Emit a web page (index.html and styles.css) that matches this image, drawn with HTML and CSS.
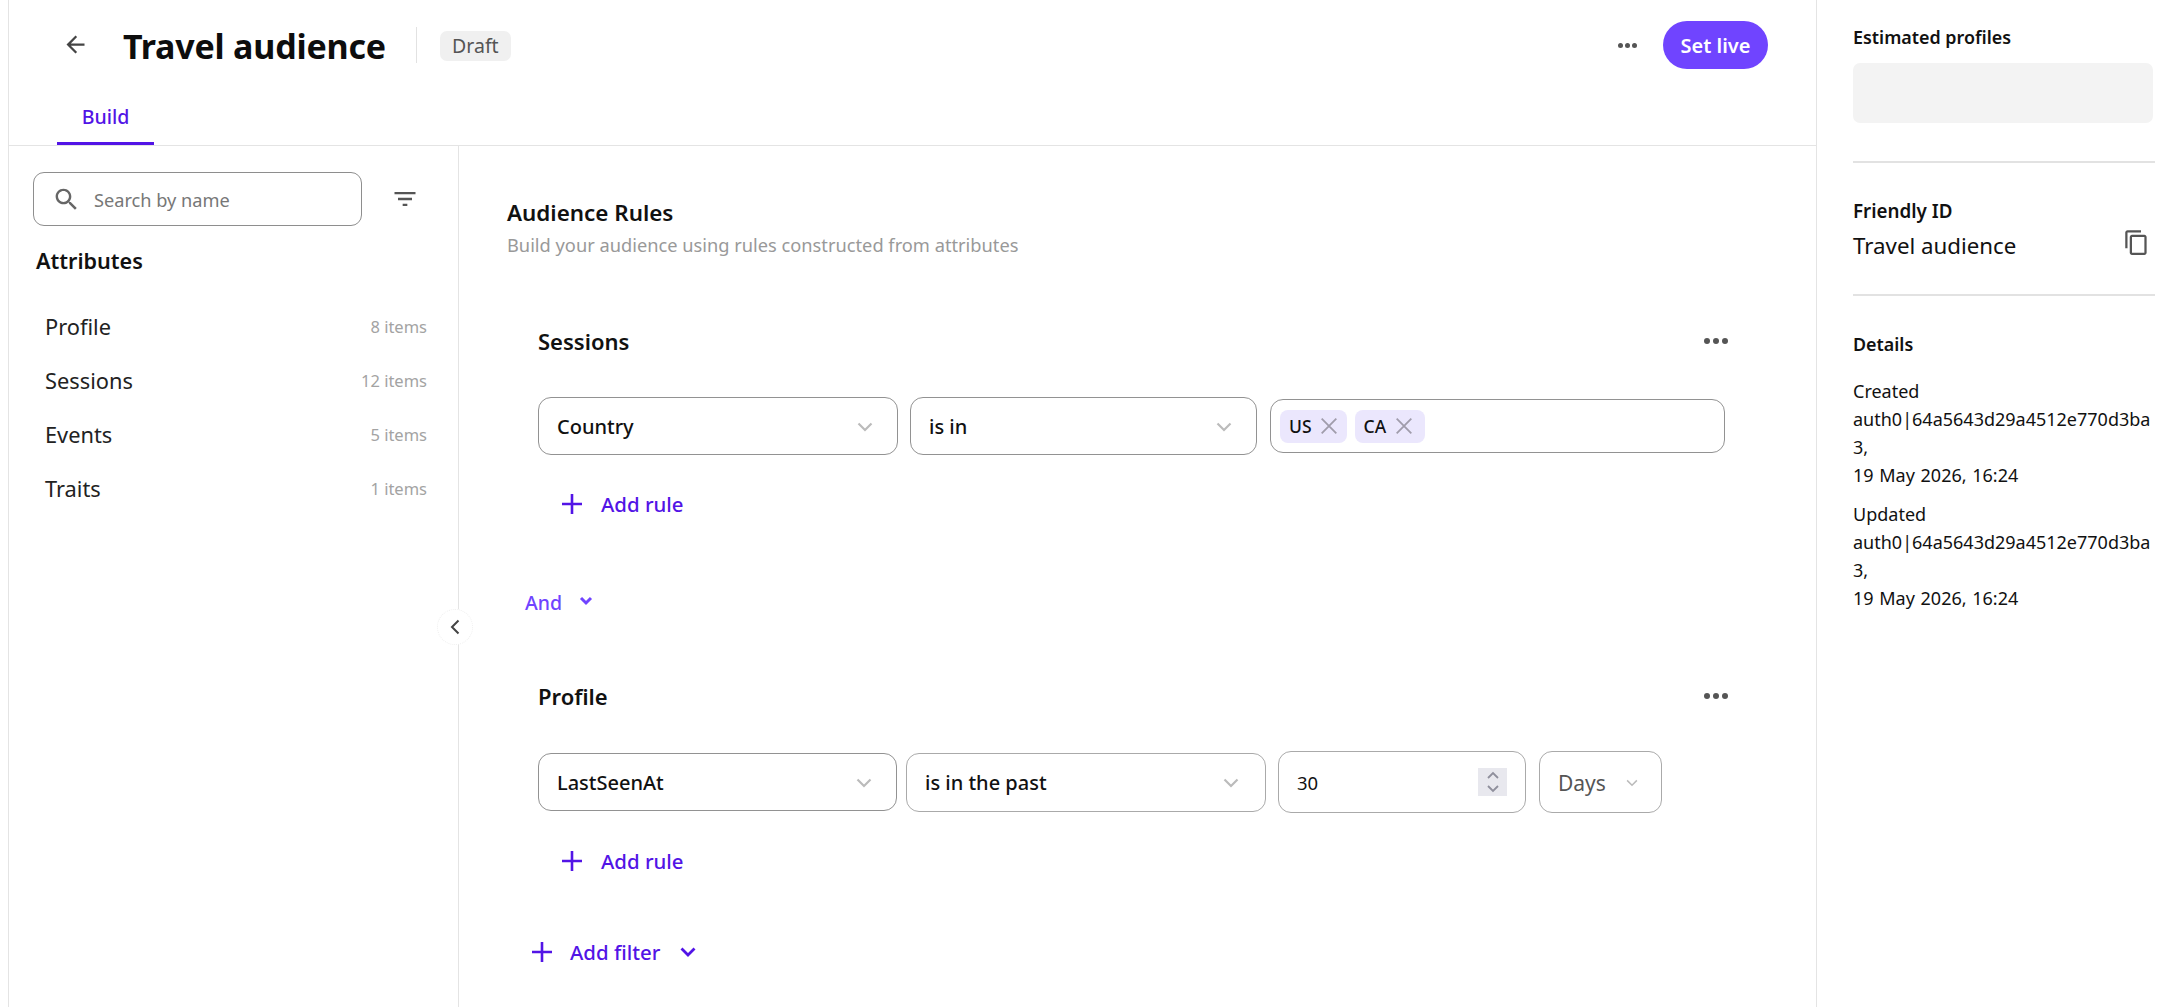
FILE: index.html
```html
<!DOCTYPE html>
<html lang="en">
<head>
<meta charset="utf-8">
<title>Travel audience</title>
<link rel="stylesheet" href="styles.css">
</head>
<body>
<div class="app">
  <main class="main">
    <header class="header">
      <div class="topbar">
        <button class="icon-btn back" aria-label="Back">
          <svg class="ic-back" viewBox="0 0 24 24"><path d="M20 11H7.83l5.59-5.59L12 4l-8 8 8 8 1.41-1.41L7.83 13H20v-2z"/></svg>
        </button>
        <h1 class="title">Travel audience</h1>
        <span class="title-sep"></span>
        <span class="status">Draft</span>
        <div class="top-actions">
          <span class="dots"><i></i><i></i><i></i></span>
          <button class="primary">Set live</button>
        </div>
      </div>
      <nav class="tabs"><a class="tab">Build</a></nav>
    </header>
    <div class="workspace">
      <aside class="sidebar">
        <div class="search-row">
          <label class="search">
            <svg class="ic-search" viewBox="0 0 24 24"><path d="M15.5 14h-.79l-.28-.27C15.41 12.59 16 11.11 16 9.5 16 5.91 13.09 3 9.5 3S3 5.91 3 9.5 5.91 16 9.5 16c1.61 0 3.09-.59 4.23-1.57l.27.28v.79l5 4.99L20.49 19l-4.99-5zm-6 0C7.01 14 5 11.99 5 9.5S7.01 5 9.5 5 14 7.01 14 9.5 11.99 14 9.5 14z"/></svg>
            <span class="placeholder">Search by name</span>
          </label>
          <svg class="ic-filter" viewBox="0 0 24 24"><path d="M10 18h4v-2h-4v2zM3 6v2h18V6H3zm3 7h12v-2H6v2z"/></svg>
        </div>
        <h2 class="attr-title">Attributes</h2>
        <ul class="attr-list">
          <li><span>Profile</span><small>8 items</small></li>
          <li><span>Sessions</span><small>12 items</small></li>
          <li><span>Events</span><small>5 items</small></li>
          <li><span>Traits</span><small>1 items</small></li>
        </ul>
        <button class="collapse" aria-label="Collapse">
          <svg viewBox="0 0 12 16"><path d="M9.5 1.5 3 8l6.5 6.5"/></svg>
        </button>
      </aside>
      <section class="content">
        <h2 class="rules-title">Audience Rules</h2>
        <p class="rules-sub">Build your audience using rules constructed from attributes</p>

        <div class="card card-first">
          <div class="card-head"><h3>Sessions</h3><span class="dots dots-lg"><i></i><i></i><i></i></span></div>
          <div class="row row-one">
            <div class="select w-country"><span>Country</span><svg class="chev" viewBox="0 0 16 10"><path d="M1.5 1.5 8 8l6.5-6.5"/></svg></div>
            <div class="select w-isin"><span>is in</span><svg class="chev" viewBox="0 0 16 10"><path d="M1.5 1.5 8 8l6.5-6.5"/></svg></div>
            <div class="multi">
              <span class="chip">US<svg viewBox="0 0 16 16"><path d="M1.5 1.5l13 13M14.5 1.5l-13 13"/></svg></span>
              <span class="chip">CA<svg viewBox="0 0 16 16"><path d="M1.5 1.5l13 13M14.5 1.5l-13 13"/></svg></span>
            </div>
          </div>
          <button class="link add-rule"><svg class="plus" viewBox="0 0 20 20"><path d="M10 0v20M0 10h20"/></svg>Add rule</button>
        </div>

        <button class="and">And<svg viewBox="0 0 14 10"><path d="M2 2l5 5 5-5"/></svg></button>

        <div class="card card-second">
          <div class="card-head"><h3>Profile</h3><span class="dots dots-lg"><i></i><i></i><i></i></span></div>
          <div class="row row-two">
            <div class="select w-last"><span>LastSeenAt</span><svg class="chev" viewBox="0 0 16 10"><path d="M1.5 1.5 8 8l6.5-6.5"/></svg></div>
            <div class="select w-past"><span>is in the past</span><svg class="chev" viewBox="0 0 16 10"><path d="M1.5 1.5 8 8l6.5-6.5"/></svg></div>
            <div class="number"><span>30</span>
              <span class="spin"><svg viewBox="0 0 14 22"><path d="M2 7l5-5 5 5M2 15l5 5 5-5"/></svg></span>
            </div>
            <div class="select w-days"><span>Days</span><svg class="chev chev-sm" viewBox="0 0 16 10"><path d="M1.5 1.5 8 8l6.5-6.5"/></svg></div>
          </div>
          <button class="link add-rule add-rule-two"><svg class="plus" viewBox="0 0 20 20"><path d="M10 0v20M0 10h20"/></svg>Add rule</button>
        </div>

        <button class="link add-filter"><svg class="plus" viewBox="0 0 20 20"><path d="M10 0v20M0 10h20"/></svg>Add filter<svg class="chev-filter" viewBox="0 0 16 10"><path d="M1.5 1.5 8 8l6.5-6.5"/></svg></button>
      </section>
    </div>
  </main>
  <aside class="details">
    <h4 class="d-head d-est">Estimated profiles</h4>
    <div class="skeleton"></div>
    <hr class="d-rule d-rule-one">
    <h4 class="d-head d-friendly">Friendly ID</h4>
    <div class="friendly"><span>Travel audience</span>
      <svg class="ic-copy" viewBox="0 0 24 24"><path d="M16 1H4c-1.1 0-2 .9-2 2v14h2V3h12V1zm3 4H8c-1.1 0-2 .9-2 2v14c0 1.1.9 2 2 2h11c1.1 0 2-.9 2-2V7c0-1.1-.9-2-2-2zm0 16H8V7h11v14z"/></svg>
    </div>
    <hr class="d-rule d-rule-two">
    <h4 class="d-head d-details">Details</h4>
    <p class="meta">Created<br>auth0|64a5643d29a4512e770d3ba<br>3,<br>19 May 2026, 16:24</p>
    <p class="meta">Updated<br>auth0|64a5643d29a4512e770d3ba<br>3,<br>19 May 2026, 16:24</p>
  </aside>
</div>
</body>
</html>
```
FILE: styles.css
```css
* { box-sizing: border-box; }
html, body { margin: 0; height: 100%; background: #fff; }
body { font-family: "Noto Sans", "Open Sans", sans-serif; color: #111; overflow: hidden; }
button { font: inherit; background: none; border: 0; padding: 0; cursor: pointer; }
h1, h2, h3, h4, p, ul { margin: 0; padding: 0; }

.app { display: flex; height: 1007px; padding-left: 8px; }
.main { width: 1809px; flex: none; display: flex; flex-direction: column; border-left: 1px solid #e4e4e4; border-right: 1px solid #e4e4e4; }

/* header */
.header { height: 146px; flex: none; border-bottom: 1px solid #e4e4e4; display: flex; flex-direction: column; }
.topbar { height: 90px; display: flex; align-items: center; padding-left: 53px; padding-right: 48px; }
.back { display: flex; width: 61px; }
.ic-back { width: 27px; height: 27px; fill: #444; margin-top: -2px; }
.title { font-size: 34px; font-weight: 700; line-height: 44px; letter-spacing: -.2px; color: #0d0d0d; margin-top: 2px; }
.title-sep { width: 1px; height: 36px; background: #e2e2e2; margin: 0 23px 0 30px; }
.status { width: 71px; height: 30px; border-radius: 7px; background: #f0f0f0; color: #555; font-size: 19.5px; line-height: 30px; text-align: center; margin-top: 2px; }
.top-actions { margin-left: auto; display: flex; align-items: center; gap: 26px; }
.dots { display: flex; gap: 2px; }
.dots i { width: 5px; height: 5px; border-radius: 50%; background: #555; }
.dots-lg { gap: 3px; }
.dots-lg i { width: 6px; height: 6px; }
.primary { width: 105px; height: 48px; border-radius: 24px; background: #7044ff; color: #fff; font-size: 20px; font-weight: 600; }
.tabs { flex: 1; padding-left: 48px; display: flex; }
.tab { width: 97px; height: 54px; border-bottom: 3px solid #5214e6; color: #5214e6; font-size: 19.5px; font-weight: 500; text-align: center; line-height: 52px; margin-top: 1px; }

/* layout */
.workspace { flex: 1; display: flex; min-height: 0; }
.sidebar { width: 450px; flex: none; border-right: 1px solid #e4e4e4; padding: 26px 31px 0 24px; position: relative; }

/* sidebar */
.search-row { display: flex; align-items: center; gap: 29px; }
.search { width: 329px; height: 54px; flex: none; border: 1.5px solid #8e8e8e; border-radius: 11px; display: flex; align-items: center; padding-left: 18px; }
.ic-search { width: 29px; height: 29px; fill: #666; flex: none; margin-right: 13px; }
.placeholder { font-size: 18.2px; color: #777; padding-top: 1px; }
.ic-filter { width: 28px; height: 28px; fill: #555; flex: none; }
.attr-title { font-size: 21.6px; font-weight: 600; line-height: 30px; margin: 20px 0 0 3px; }
.attr-list { list-style: none; margin: 23px 0 0 12px; }
.attr-list li { height: 54px; display: flex; align-items: center; justify-content: space-between; font-size: 21.8px; color: #222; }
.attr-list small { font-size: 16.5px; color: #a3a3a3; }
.collapse { position: absolute; right: -15px; top: 463px; width: 36px; height: 36px; border-radius: 50%; background: #fff; border: 1px dotted #f0f0f0; display: flex; align-items: center; justify-content: center; }
.collapse svg { width: 12px; height: 16px; fill: none; stroke: #444; stroke-width: 2; }

/* rules */
.content { flex: 1; padding: 52px 0 0 48px; }
.rules-title { font-size: 22.4px; font-weight: 600; line-height: 30px; }
.rules-sub { font-size: 18.25px; line-height: 26px; color: #999; margin-top: 4px; }
.card { margin-left: 31px; width: 1190px; }
.card-first { margin-top: 68px; }
.card-second { margin-top: 64px; }
.card-head { height: 30px; display: flex; align-items: center; justify-content: space-between; }
.card-head h3 { font-size: 22px; font-weight: 600; }
.row { display: flex; align-items: center; }
.row-one { margin-top: 41px; height: 58px; gap: 12px; }
.row-two { margin-top: 40px; height: 62px; gap: 9px; }
.select { height: 58px; border: 1.5px solid #929292; border-radius: 13px; display: flex; align-items: center; justify-content: space-between; padding: 1px 24px 0 18px; font-size: 20px; font-weight: 500; flex: none; }
.chev { width: 16px; height: 10px; fill: none; stroke: #bbb; stroke-width: 2.2; flex: none; }
.chev-sm { width: 12px; height: 8px; stroke-width: 2; }
.w-country { width: 360px; }
.w-isin { width: 347px; margin-right: 1px; }
.multi { width: 455px; height: 54px; border: 1.5px solid #929292; border-radius: 13px; display: flex; align-items: center; gap: 8px; padding-left: 9px; flex: none; }
.chip { height: 33px; border-radius: 8px; background: #ebe7fd; padding: 0 9px; display: flex; align-items: center; gap: 8px; font-size: 17.5px; font-weight: 500; }
.chip + .chip { padding-right: 12px; gap: 9px; }
.chip svg { width: 18px; height: 18px; fill: none; stroke: #a09cab; stroke-width: 1.6; }
.w-last { width: 359px; }
.w-past { width: 360px; height: 59px; border-color: #aaa; margin-right: 3px; padding-right: 26px; }
.number { width: 248px; height: 62px; border: 1.5px solid #aaa; border-radius: 13px; display: flex; align-items: center; justify-content: space-between; padding: 0 18px 0 18px; font-size: 18.5px; flex: none; }
.spin { width: 29px; height: 28px; background: #e8e8ee; display: flex; align-items: center; justify-content: center; }
.spin svg { width: 14px; height: 22px; fill: none; stroke: #8f8f9c; stroke-width: 1.8; }
.w-days { width: 123px; height: 62px; margin-left: 4px; border-color: #aaa; color: #555; font-size: 21px; font-weight: 400; padding-right: 23px; }

.link { height: 30px; display: flex; align-items: center; color: #5214e6; font-size: 20.4px; font-weight: 500; }
.plus { width: 20px; height: 20px; fill: none; stroke: #5214e6; stroke-width: 2.6; flex: none; }
.add-rule { margin: 34px 0 0 24px; gap: 19px; }
.add-rule-two { margin-top: 33px; }
.add-filter { margin: 61px 0 0 25px; gap: 18px; }
.chev-filter { width: 16px; height: 10px; fill: none; stroke: #5214e6; stroke-width: 2.8; margin-left: 2px; }
.and { height: 30px; margin: 68px 0 0 18px; display: flex; align-items: center; gap: 17px; color: #7044ff; font-size: 19.5px; font-weight: 500; }
.and svg { width: 14px; height: 10px; fill: none; stroke: #7044ff; stroke-width: 3; margin-top: -3px; }

/* right panel */
.details { flex: 1; padding: 22px 27px 0 36px; font-size: 18px; color: #111; }
.d-head { font-size: 17.9px; font-weight: 600; line-height: 30px; }
.skeleton { height: 60px; margin-top: 11px; width: 300px; background: #f3f3f3; border-radius: 7px; }
.d-rule { border: 0; margin: 0; background: #e2e2e2; width: 302px; }
.d-rule-one { height: 1.5px; margin-top: 38px; }
.d-friendly { margin-top: 33px; font-size: 18.8px; }
.friendly { display: flex; justify-content: space-between; align-items: center; height: 30px; margin-top: 5px; font-size: 22.3px; }
.ic-copy { width: 27px; height: 27px; fill: #555; margin: -6px 5px 0 0; }
.d-rule-two { height: 2px; margin-top: 33px; }
.d-details { margin-top: 33px; }
.meta { line-height: 28px; margin-top: 11px; word-spacing: 1px; }
.d-details + .meta { margin-top: 18px; }
```
